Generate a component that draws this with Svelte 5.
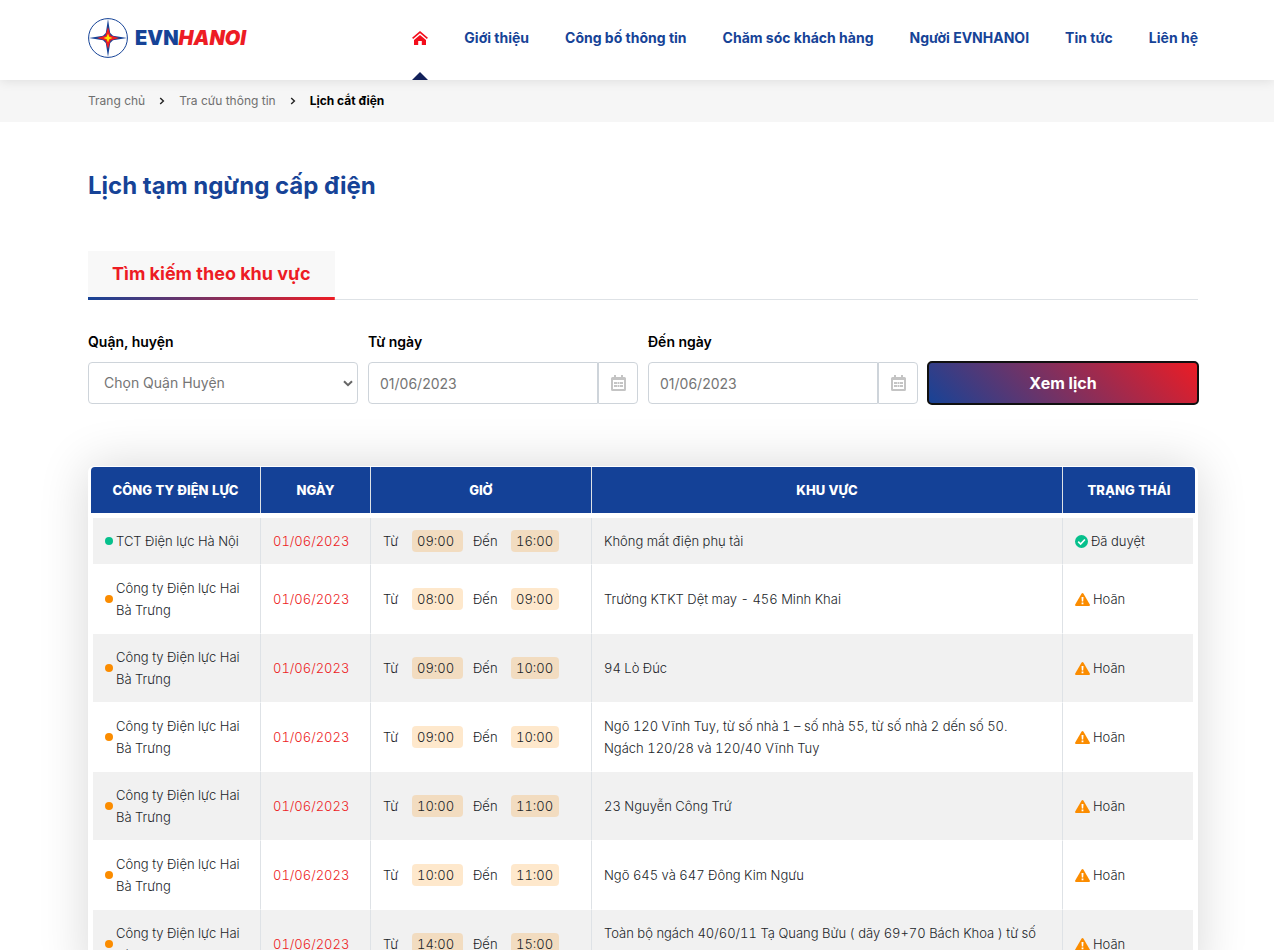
<script lang="ts">
  type Row = {
    company: string;
    date: string;
    from: string;
    to: string;
    area: string;
    approved?: boolean;
  };

  const menu = [
    'Giới thiệu',
    'Công bố thông tin',
    'Chăm sóc khách hàng',
    'Người EVNHANOI',
    'Tin tức',
    'Liên hệ'
  ];

  const haiBaTrung = 'Công ty Điện lực Hai Bà Trưng';
  const date = '01/06/2023';

  const rows: Row[] = [
    { company: 'TCT Điện lực Hà Nội', date, from: '09:00', to: '16:00', area: 'Không mất điện phụ tải', approved: true },
    { company: haiBaTrung, date, from: '08:00', to: '09:00', area: 'Trường KTKT Dệt may - 456 Minh Khai' },
    { company: haiBaTrung, date, from: '09:00', to: '10:00', area: '94 Lò Đúc' },
    {
      company: haiBaTrung,
      date,
      from: '09:00',
      to: '10:00',
      area: 'Ngõ 120 Vĩnh Tuy, từ số nhà 1 – số nhà 55, từ số nhà 2 dến số 50.\nNgách 120/28 và 120/40 Vĩnh Tuy'
    },
    { company: haiBaTrung, date, from: '10:00', to: '11:00', area: '23 Nguyễn Công Trứ' },
    { company: haiBaTrung, date, from: '10:00', to: '11:00', area: 'Ngõ 645 và 647 Đông Kim Ngưu' },
    {
      company: haiBaTrung,
      date,
      from: '14:00',
      to: '15:00',
      area: 'Toàn bộ ngách 40/60/11 Tạ Quang Bửu ( dãy 69+70 Bách Khoa ) từ số\n\n'
    }
  ];

  let district = $state('');
  let fromDate = $state(date);
  let toDate = $state(date);
</script>

{#snippet chevron()}
  <svg class="chevron" viewBox="0 0 6 8" aria-hidden="true">
    <path d="M1.2 1 4.4 4 1.2 7" fill="none" stroke="currentColor" stroke-width="1.4" />
  </svg>
{/snippet}

{#snippet calendar()}
  <svg viewBox="0 0 15 16" width="15" height="16" aria-hidden="true">
    <path
      fill="#c4c4c4"
      fill-rule="evenodd"
      d="M3 0h2v2h5V0h2v2h1.500A1.500 1.500 0 0 1 15 3.500v11a1.500 1.500 0 0 1-1.500 1.500h-12A1.500 1.500 0 0 1 0 14.500v-11A1.500 1.500 0 0 1 1.500 2H3zM2 5v9h11V5zM3 7h3v2H3zm3.500 0h2v2h-2zM9 7h3v2H9zM3 10h3v2H3zm3.500 0h2v2h-2zM9 10h3v2H9z"
    />
  </svg>
{/snippet}

<header class="header">
  <div class="container header-inner">
    <a class="logo" href="#home">
      <svg viewBox="0 0 40 40" width="40" height="40" aria-hidden="true">
        <circle cx="20" cy="20" r="19.400" fill="#fff" stroke="#164397" stroke-width="1" />
        <path fill="#164397" d="M20 1 22.200 15 25 17.800 39 20 25 22.200 22.200 25 20 39 17.800 25 15 22.200 1 20 15 17.800 17.800 15z" />
        <path fill="#ed1c24" d="M20 9 22.600 17.400 31 20 22.600 22.600 20 31 17.400 22.600 9 20 17.400 17.400z" />
        <path fill="#ffe600" d="M20 15.500 21.300 18.700 24.500 20 21.300 21.300 20 24.500 18.700 21.300 15.500 20 18.700 18.700z" />
      </svg>
      <span class="brand">EVN<em>HANOI</em></span>
    </a>
    <nav class="nav">
      <a class="home" href="#home" aria-label="Trang chủ">
        <svg viewBox="0 0 16 14" width="16" height="14" aria-hidden="true">
          <path fill="none" stroke="#f30d1b" stroke-width="1.600" d="M.6 7.400 8 1.100l7.400 6.300" />
          <path fill="#f30d1b" d="M8 3.900 14 9v5H9.800v-4H6.200v4H2V9z" />
        </svg>
      </a>
      {#each menu as item}
        <a href="#menu">{item}</a>
      {/each}
    </nav>
  </div>
</header>

<div class="breadcrumb">
  <nav class="container crumbs" aria-label="breadcrumb">
    <a href="#home">Trang chủ</a>
    {@render chevron()}
    <a href="#search">Tra cứu thông tin</a>
    {@render chevron()}
    <b>Lịch cắt điện</b>
  </nav>
</div>

<main class="container">
  <h1>Lịch tạm ngừng cấp điện</h1>

  <div class="tabs">
    <button class="tab" type="button">Tìm kiếm theo khu vực</button>
  </div>

  <form class="search" onsubmit={(e) => e.preventDefault()}>
    <div class="field">
      <label for="district">Quận, huyện</label>
      <div class="select">
        <select id="district" bind:value={district}>
          <option value="">Chọn Quận Huyện</option>
        </select>
        <svg viewBox="0 0 10 7" width="10" height="7" aria-hidden="true">
          <path d="M1 1.200 5 5.200 9 1.200" fill="none" stroke="#666" stroke-width="2" />
        </svg>
      </div>
    </div>
    <div class="field">
      <label for="from">Từ ngày</label>
      <div class="date">
        <input id="from" bind:value={fromDate} />
        <button type="button" aria-label="Chọn từ ngày">{@render calendar()}</button>
      </div>
    </div>
    <div class="field">
      <label for="to">Đến ngày</label>
      <div class="date">
        <input id="to" bind:value={toDate} />
        <button type="button" aria-label="Chọn đến ngày">{@render calendar()}</button>
      </div>
    </div>
    <button class="submit" type="submit">Xem lịch</button>
  </form>

  <div class="card">
    <table>
      <thead>
        <tr>
          <th class="col-company">CÔNG TY ĐIỆN LỰC</th>
          <th class="col-date">NGÀY</th>
          <th class="col-time">GIỜ</th>
          <th>KHU VỰC</th>
          <th class="col-status">TRẠNG THÁI</th>
        </tr>
      </thead>
      <tbody>
        {#each rows as row}
          <tr>
            <td>
              <div class="company">
                <span class="dot" class:green={row.approved}></span>
                <span>{row.company}</span>
              </div>
            </td>
            <td class="day">{row.date}</td>
            <td>
              <div class="time">
                <span>Từ</span>
                <span class="hour">{row.from}</span>
                <span>Đến</span>
                <span class="hour">{row.to}</span>
              </div>
            </td>
            <td class="area">{row.area}</td>
            <td>
              {#if row.approved}
                <div class="status">
                  <svg viewBox="0 0 13 13" width="13" height="13" aria-hidden="true">
                    <circle cx="6.500" cy="6.500" r="6.500" fill="#06c08c" />
                    <path d="M3.200 6.700 5.600 9 9.900 4.500" fill="none" stroke="#fff" stroke-width="1.700" />
                  </svg>
                  <span>Đã duyệt</span>
                </div>
              {:else}
                <div class="status">
                  <svg viewBox="0 0 15 13" width="15" height="13" aria-hidden="true">
                    <path fill="#fb8c00" d="M6.600.6q.9-1.200 1.800 0l6.400 11q.5 1.300-.9 1.400H1.100Q-.3 12.900.2 11.600z" />
                    <path fill="#fff" d="M6.500 4h2l-.3 4.500H6.800zM6.600 9.400h1.800v1.800H6.600z" />
                  </svg>
                  <span>Hoãn</span>
                </div>
              {/if}
            </td>
          </tr>
        {/each}
      </tbody>
    </table>
  </div>
</main>

<style>
  :global(body) {
    font-family: Inter, 'Liberation Sans', sans-serif;
    font-size: 14px;
    line-height: 22px;
    color: #212529;
    background: #fff;
  }

  a {
    color: inherit;
    text-decoration: none;
  }

  svg {
    display: block;
    flex: none;
  }

  button,
  input,
  select {
    font: inherit;
    box-sizing: border-box;
  }

  .container {
    padding: 0 76px 0 88px;
  }

  .header {
    position: relative;
    background: #fff;
    box-shadow: 0 0 12px rgba(0, 0, 0, 0.12);
  }

  .header-inner {
    display: flex;
    align-items: center;
    justify-content: space-between;
    height: 80px;
  }

  .logo {
    display: flex;
    align-items: center;
    gap: 7px;
    padding-bottom: 4px;
  }

  .brand {
    font-size: 20px;
    font-weight: 900;
    color: #164397;
  }

  .brand em {
    color: #ed1c24;
  }

  .nav {
    display: flex;
    align-items: center;
    gap: 36px;
    height: 76px;
    padding-bottom: 4px;
    font-weight: 700;
    color: #164397;
    white-space: nowrap;
  }

  .home {
    position: relative;
    display: flex;
    align-items: center;
    height: 76px;
  }

  .home::after {
    content: '';
    position: absolute;
    left: 0;
    bottom: -4px;
    border: 8px solid transparent;
    border-top: 0;
    border-bottom-color: #12205a;
  }

  .breadcrumb {
    background: #f6f6f6;
  }

  .crumbs {
    display: flex;
    align-items: center;
    gap: 14px;
    height: 42px;
    font-size: 12px;
    color: #6f6f6f;
  }

  .crumbs b {
    font-weight: 700;
    color: #000;
  }

  .chevron {
    width: 6px;
    height: 8px;
    color: #222;
  }

  h1 {
    margin: 0;
    padding: 48px 0 49px;
    font-size: 24px;
    line-height: 32px;
    font-weight: 700;
    color: #164397;
  }

  .tabs {
    display: flex;
    border-bottom: 1px solid #dee2e6;
  }

  .tab {
    height: 49px;
    margin-bottom: -1px;
    padding: 0 24px 3px;
    border: 0;
    font-size: 18px;
    font-weight: 700;
    color: #ed1c24;
    background:
      linear-gradient(90deg, #164397, #ed1c24) bottom / 100% 3px no-repeat,
      #f8f8f8;
  }

  .search {
    display: grid;
    grid-template-columns: repeat(4, 1fr);
    align-items: end;
    gap: 10px;
    padding: 31px 0 62px;
  }

  .field {
    display: flex;
    flex-direction: column;
    gap: 9px;
    min-width: 0;
  }

  .field label {
    font-size: 14px;
    font-weight: 600;
    color: #000;
  }

  .select {
    display: grid;
    align-items: center;
  }

  .select > * {
    grid-area: 1 / 1;
  }

  .select svg {
    justify-self: end;
    margin-right: 5px;
    pointer-events: none;
  }

  select,
  input {
    width: 100%;
    height: 42px;
    border: 1px solid #ced4da;
    border-radius: 4px;
    background: #fff;
    color: #757575;
  }

  select {
    appearance: none;
    padding: 0 15px;
  }

  .date {
    display: flex;
  }

  .date input {
    flex: 1;
    min-width: 0;
    padding: 0 11px;
    border-radius: 4px 0 0 4px;
  }

  .date button {
    display: flex;
    align-items: center;
    justify-content: center;
    width: 40px;
    height: 42px;
    padding: 0;
    border: 1px solid #ced4da;
    border-radius: 0 4px 4px 0;
    background: #fff;
  }

  .submit {
    height: 42px;
    border: 0;
    border-radius: 4px;
    outline: 2px solid #101010;
    outline-offset: -1px;
    background: linear-gradient(45deg, #164397, #ed1c24);
    font-size: 16px;
    font-weight: 700;
    color: #fff;
  }

  .card {
    padding: 1px 3px;
    border-radius: 6px;
    background: #fff;
    box-shadow: 0 0 50px rgba(0, 0, 0, 0.16);
  }

  table {
    width: 100%;
    table-layout: fixed;
    border-collapse: separate;
    border-spacing: 0;
    font-size: 13px;
    font-variant-numeric: tabular-nums;
  }

  th {
    padding: 12px 0;
    border-right: 1px solid #dee2e6;
    font-weight: 800;
    color: #fff;
    background: #144197;
  }

  th:first-child {
    border-top-left-radius: 4px;
  }

  th:last-child {
    border-right: 0;
    border-top-right-radius: 4px;
  }

  tbody::before {
    content: '';
    display: table-row;
    height: 5px;
  }

  td {
    padding: 12px;
    border-right: 1px solid #dee2e6;
    border-bottom: 1px solid #fff;
    font-weight: 300;
    vertical-align: middle;
  }

  td:first-child {
    border-left: 2px solid #fff;
  }

  td:last-child {
    border-right: 2px solid #fff;
  }

  tbody tr:nth-child(odd) {
    background: #f1f1f1;
  }

  .col-company {
    width: 169px;
  }

  .col-date {
    width: 109px;
  }

  .col-time {
    width: 220px;
  }

  .col-status {
    width: 132px;
  }

  .company,
  .status {
    display: flex;
    align-items: center;
    gap: 3px;
  }

  .dot {
    flex: none;
    width: 8px;
    height: 8px;
    border-radius: 50%;
    background: #fb8c00;
  }

  .dot.green {
    background: #06c08c;
  }

  .day {
    color: #ed1c24;
  }

  .area {
    white-space: pre-line;
  }

  .time {
    display: grid;
    grid-template-columns: 19px 51px 28px 48px;
    gap: 10px;
  }

  .hour {
    padding: 0 5px;
    border-radius: 4px;
    background: rgba(251, 140, 0, 0.2);
  }
</style>
